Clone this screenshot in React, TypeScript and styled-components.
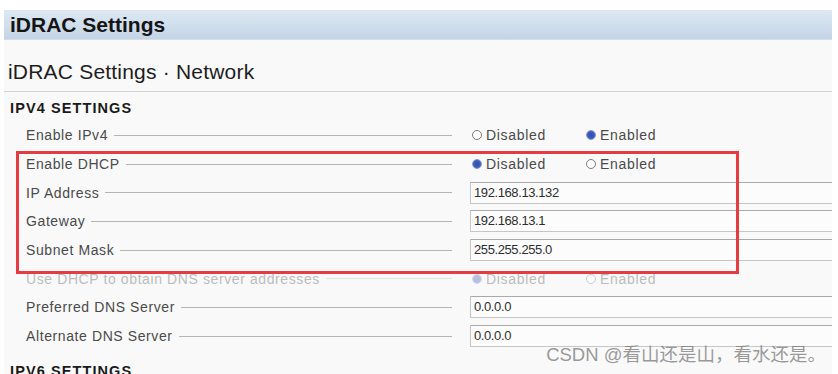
import * as React from "react"
import styled, { createGlobalStyle } from "styled-components"

const GlobalStyle = createGlobalStyle`
  html, body {
    margin: 0;
    padding: 0;
    background: #ffffff;
    overflow: hidden;
  }
  body {
    font-family: "Liberation Sans", Arial, sans-serif;
  }
`

const Page = styled.div`
  position: relative;
  width: 838px;
  height: 374px;
  padding: 10px 0 0 4px;
  box-sizing: border-box;
  overflow: hidden;
`

const HeaderBar = styled.header`
  width: 828px;
  height: 30px;
  background: linear-gradient(to bottom, #dde8f3 0%, #cfdeec 55%, #c3d4e6 100%);
  border-bottom: 1px solid #d8dde3;
  box-sizing: border-box;
  padding-left: 6px;
  font-size: 21px;
  font-weight: bold;
  line-height: 30px;
  color: #151515;
  letter-spacing: 0;
`

const Panel = styled.section`
  position: relative;
  width: 828px;
  height: 334px;
  background: #f9f9f9;
`

const PageTitle = styled.h1`
  margin: 0;
  padding: 20px 0 7px 4px;
  font-size: 21px;
  font-weight: normal;
  line-height: 24px;
  color: #1d1d1d;
  border-bottom: 1px solid #d2d2d2;
  letter-spacing: 0.2px;
`

const SectionHeading = styled.h2`
  margin: 0;
  padding: 6px 0 0 6px;
  font-size: 14.5px;
  font-weight: bold;
  line-height: 21px;
  letter-spacing: 1.1px;
  color: #1a1a1a;
`

const Rows = styled.div`
  display: flex;
  flex-direction: column;
  padding-top: 2px;
  padding-bottom: 4px;
`

const Row = styled.div<{ $faded?: boolean }>`
  display: grid;
  grid-template-columns: 426px 1fr;
  column-gap: 18px;
  align-items: center;
  height: 28.7px;
  padding-left: 22px;
  opacity: ${p => (p.$faded ? 0.35 : 1)};
`

const LabelCell = styled.div`
  display: flex;
  align-items: center;
  font-size: 14px;
  letter-spacing: 0.6px;
  color: #4a4a4a;
  white-space: nowrap;

  &::after {
    content: "";
    flex: 1;
    height: 1px;
    margin-left: 6px;
    background: #b4b4b4;
  }
`

const Field = styled.div`
  height: 22px;
  box-sizing: border-box;
  border: 1px solid #c6c6c6;
  border-top-color: #a9a9a9;
  border-right: none;
  background: #fcfcfc;
  padding-left: 3px;
  font-size: 13px;
  line-height: 20px;
  letter-spacing: -0.4px;
  color: #2e2e2e;
`

const RadioGroup = styled.div`
  display: flex;
  padding-left: 2px;
`

const RadioOption = styled.div`
  display: flex;
  align-items: center;
  width: 114px;
  gap: 4px;
  font-size: 14px;
  letter-spacing: 0.7px;
  color: #4a4a4a;
`

const RadioDot = styled.span<{ $checked?: boolean }>`
  width: 10px;
  height: 10px;
  border-radius: 50%;
  box-sizing: border-box;
  border: 1.5px solid ${p => (p.$checked ? "#8093d0" : "#7a7a7a")};
  background: ${p =>
    p.$checked ? "radial-gradient(circle, #2f4fae 0%, #3e5db9 60%, #8da2dc 100%)" : "#ffffff"};
`

const Highlight = styled.div`
  position: absolute;
  left: 12px;
  top: 111px;
  width: 717px;
  height: 117px;
  border: 3px solid #e63b40;
  pointer-events: none;
`

const Watermark = styled.div`
  position: absolute;
  right: 12px;
  top: 343px;
  font-family: "Liberation Sans", "Noto Sans CJK SC", sans-serif;
  font-size: 18.5px;
  line-height: 24px;
  color: rgba(120, 120, 120, 0.75);
  white-space: nowrap;
`

type RowData =
  | { label: string; kind: "radio"; checked: "Disabled" | "Enabled"; faded?: boolean }
  | { label: string; kind: "field"; value: string }

const rows: RowData[] = [
  { label: "Enable IPv4", kind: "radio", checked: "Enabled" },
  { label: "Enable DHCP", kind: "radio", checked: "Disabled" },
  { label: "IP Address", kind: "field", value: "192.168.13.132" },
  { label: "Gateway", kind: "field", value: "192.168.13.1" },
  { label: "Subnet Mask", kind: "field", value: "255.255.255.0" },
  { label: "Use DHCP to obtain DNS server addresses", kind: "radio", checked: "Disabled", faded: true },
  { label: "Preferred DNS Server", kind: "field", value: "0.0.0.0" },
  { label: "Alternate DNS Server", kind: "field", value: "0.0.0.0" }
]

const Radios = ({ checked }: { checked: string }) => (
  <RadioGroup>
    {["Disabled", "Enabled"].map(opt => (
      <RadioOption key={opt}>
        <RadioDot $checked={opt === checked} />
        {opt}
      </RadioOption>
    ))}
  </RadioGroup>
)

export default function App() {
  return (
    <Page>
      <GlobalStyle />
      <HeaderBar>iDRAC Settings</HeaderBar>
      <Panel>
        <PageTitle>iDRAC Settings · Network</PageTitle>
        <SectionHeading>IPV4 SETTINGS</SectionHeading>
        <Rows>
          {rows.map(r => (
            <Row key={r.label} $faded={r.kind === "radio" && r.faded}>
              <LabelCell>{r.label}</LabelCell>
              {r.kind === "radio" ? <Radios checked={r.checked} /> : <Field>{r.value}</Field>}
            </Row>
          ))}
        </Rows>
        <SectionHeading>IPV6 SETTINGS</SectionHeading>
        <Highlight />
      </Panel>
      <Watermark>CSDN @看山还是山，看水还是。</Watermark>
    </Page>
  )
}
